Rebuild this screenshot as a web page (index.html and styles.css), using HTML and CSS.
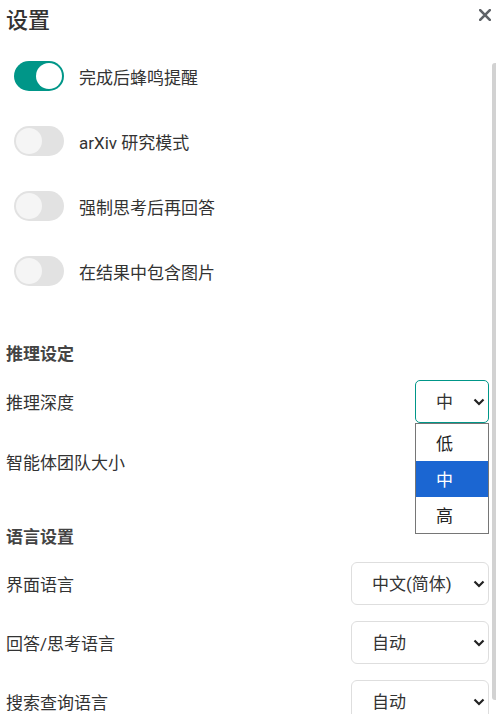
FILE: index.html
```html
<!DOCTYPE html>
<html lang="zh-CN">
<head>
<meta charset="utf-8">
<title>设置</title>
<link rel="stylesheet" href="styles.css">
</head>
<body>
<div class="panel">
  <header class="head">
    <h1 class="title">设置</h1>
    <button class="close" aria-label="关闭">
      <svg width="12" height="12" viewBox="0 0 12 12"><path d="M1.2 1.2 L10.8 10.8 M10.8 1.2 L1.2 10.8" stroke="#5f6368" stroke-width="2.6" stroke-linecap="square" fill="none"/></svg>
    </button>
  </header>
  <div class="body">
    <div class="toggles">
      <div class="toggle-row"><span class="switch on"><span class="knob"></span></span><span class="toggle-label">完成后蜂鸣提醒</span></div>
      <div class="toggle-row"><span class="switch"><span class="knob"></span></span><span class="toggle-label">arXiv 研究模式</span></div>
      <div class="toggle-row"><span class="switch"><span class="knob"></span></span><span class="toggle-label">强制思考后再回答</span></div>
      <div class="toggle-row"><span class="switch"><span class="knob"></span></span><span class="toggle-label">在结果中包含图片</span></div>
    </div>

    <h2 class="section-title s1">推理设定</h2>
    <div class="field r1">
      <span class="field-label">推理深度</span>
      <div class="select-wrap">
        <select class="select narrow focused"><option>中</option></select>
        <svg class="chev" width="12" height="8" viewBox="0 0 12 8"><path d="M1.5 1.5 L6 6 L10.5 1.5" stroke="#222" stroke-width="2.2" fill="none"/></svg>
        <ul class="dropdown">
          <li class="opt">低</li>
          <li class="opt active">中</li>
          <li class="opt">高</li>
        </ul>
      </div>
    </div>
    <div class="field r2">
      <span class="field-label">智能体团队大小</span>
    </div>

    <h2 class="section-title s2">语言设置</h2>
    <div class="field r3">
      <span class="field-label">界面语言</span>
      <div class="select-wrap">
        <select class="select wide"><option>中文(简体)</option></select>
        <svg class="chev" width="12" height="8" viewBox="0 0 12 8"><path d="M1.5 1.5 L6 6 L10.5 1.5" stroke="#222" stroke-width="2.2" fill="none"/></svg>
      </div>
    </div>
    <div class="field r4">
      <span class="field-label">回答/思考语言</span>
      <div class="select-wrap">
        <select class="select wide"><option>自动</option></select>
        <svg class="chev" width="12" height="8" viewBox="0 0 12 8"><path d="M1.5 1.5 L6 6 L10.5 1.5" stroke="#222" stroke-width="2.2" fill="none"/></svg>
      </div>
    </div>
    <div class="field r4">
      <span class="field-label">搜索查询语言</span>
      <div class="select-wrap">
        <select class="select wide"><option>自动</option></select>
        <svg class="chev" width="12" height="8" viewBox="0 0 12 8"><path d="M1.5 1.5 L6 6 L10.5 1.5" stroke="#222" stroke-width="2.2" fill="none"/></svg>
      </div>
    </div>
  </div>
  <div class="scroll-thumb"></div>
</div>
</body>
</html>
```
FILE: styles.css
```css
* { box-sizing: border-box; }
html, body { margin: 0; padding: 0; background: #fff; }
body {
  font-family: Roboto, "Noto Sans CJK SC", sans-serif;
  color: #333;
  width: 496px;
  height: 720px;
  overflow: hidden;
}
.panel {
  position: relative;
  height: 720px;
  display: flex;
  flex-direction: column;
}
.head {
  height: 44px;
  flex: none;
  display: flex;
  align-items: flex-start;
  justify-content: space-between;
  padding: 0 5px 0 6px;
}
.title {
  margin: 0;
  font-family: "Noto Sans CJK SC", sans-serif;
  font-size: 22px;
  font-weight: 500;
  line-height: 36px;
  color: #333;
}
.close {
  border: 0;
  background: none;
  padding: 0;
  margin-top: 9px;
  width: 12px;
  height: 12px;
  display: flex;
}
.body {
  height: 670px;
  flex: none;
  overflow: hidden;
  display: flex;
  flex-direction: column;
  padding: 17px 7px 7px 6px;
}
.scroll-thumb {
  position: absolute;
  right: 0;
  top: 63px;
  width: 4px;
  height: 637px;
  background: #d2d2d2;
  border-radius: 3px 0 0 3px;
}

.toggles {
  display: flex;
  flex-direction: column;
  gap: 35px;
  padding-left: 8px;
  flex: none;
}
.toggle-row {
  display: flex;
  align-items: center;
  gap: 15px;
  height: 30px;
}
.switch {
  width: 50px;
  height: 30px;
  border-radius: 15px;
  background: #e2e2e2;
  padding: 2px;
  display: flex;
  flex: none;
}
.switch .knob {
  width: 26px;
  height: 26px;
  border-radius: 50%;
  background: #f5f5f5;
}
.switch.on { background: #009688; justify-content: flex-end; }
.switch.on .knob { background: #fff; }
.toggle-label {
  font-size: 17px;
  color: #333;
}
.section-title {
  margin: 0;
  flex: none;
  font-family: "Noto Sans CJK SC", sans-serif;
  font-size: 17px;
  font-weight: 700;
  line-height: 24px;
  color: #444;
}
.s1 { margin-top: 55px; }
.s2 { margin-top: 41px; }
.field {
  height: 43px;
  flex: none;
  display: flex;
  align-items: center;
  justify-content: space-between;
}
.r1 { margin-top: 15px; }
.r2 { margin-top: 17px; }
.r3 { margin-top: 14px; }
.r4 { margin-top: 16px; }
.field-label { font-size: 17px; color: #333; }
.select-wrap { position: relative; display: flex; }
.select {
  -webkit-appearance: none;
  appearance: none;
  height: 43px;
  font-family: Roboto, "Noto Sans CJK SC", sans-serif;
  font-size: 17px;
  color: #333;
  background: #fff;
  border: 1px solid #dedede;
  border-radius: 6px;
  padding: 0 20px 0 20px;
  outline: none;
}
.select.narrow { width: 74px; }
.select.wide { width: 138px; }
.select.focused { border-color: #009688; border-radius: 5px; }
.chev {
  position: absolute;
  right: 4px;
  top: 18px;
  pointer-events: none;
}
.dropdown {
  position: absolute;
  top: 43px;
  left: 0;
  right: 0;
  margin: 0;
  padding: 0;
  list-style: none;
  background: #fff;
  border: 1px solid #767676;
  z-index: 2;
}
.opt {
  height: 36px;
  line-height: 36px;
  padding-left: 20px;
  font-family: "Noto Sans CJK SC", sans-serif;
  font-size: 17px;
  color: #222;
}
.opt:first-child { height: 37px; line-height: 37px; }
.opt.active { background: #1b66d2; color: #fff; }
```
